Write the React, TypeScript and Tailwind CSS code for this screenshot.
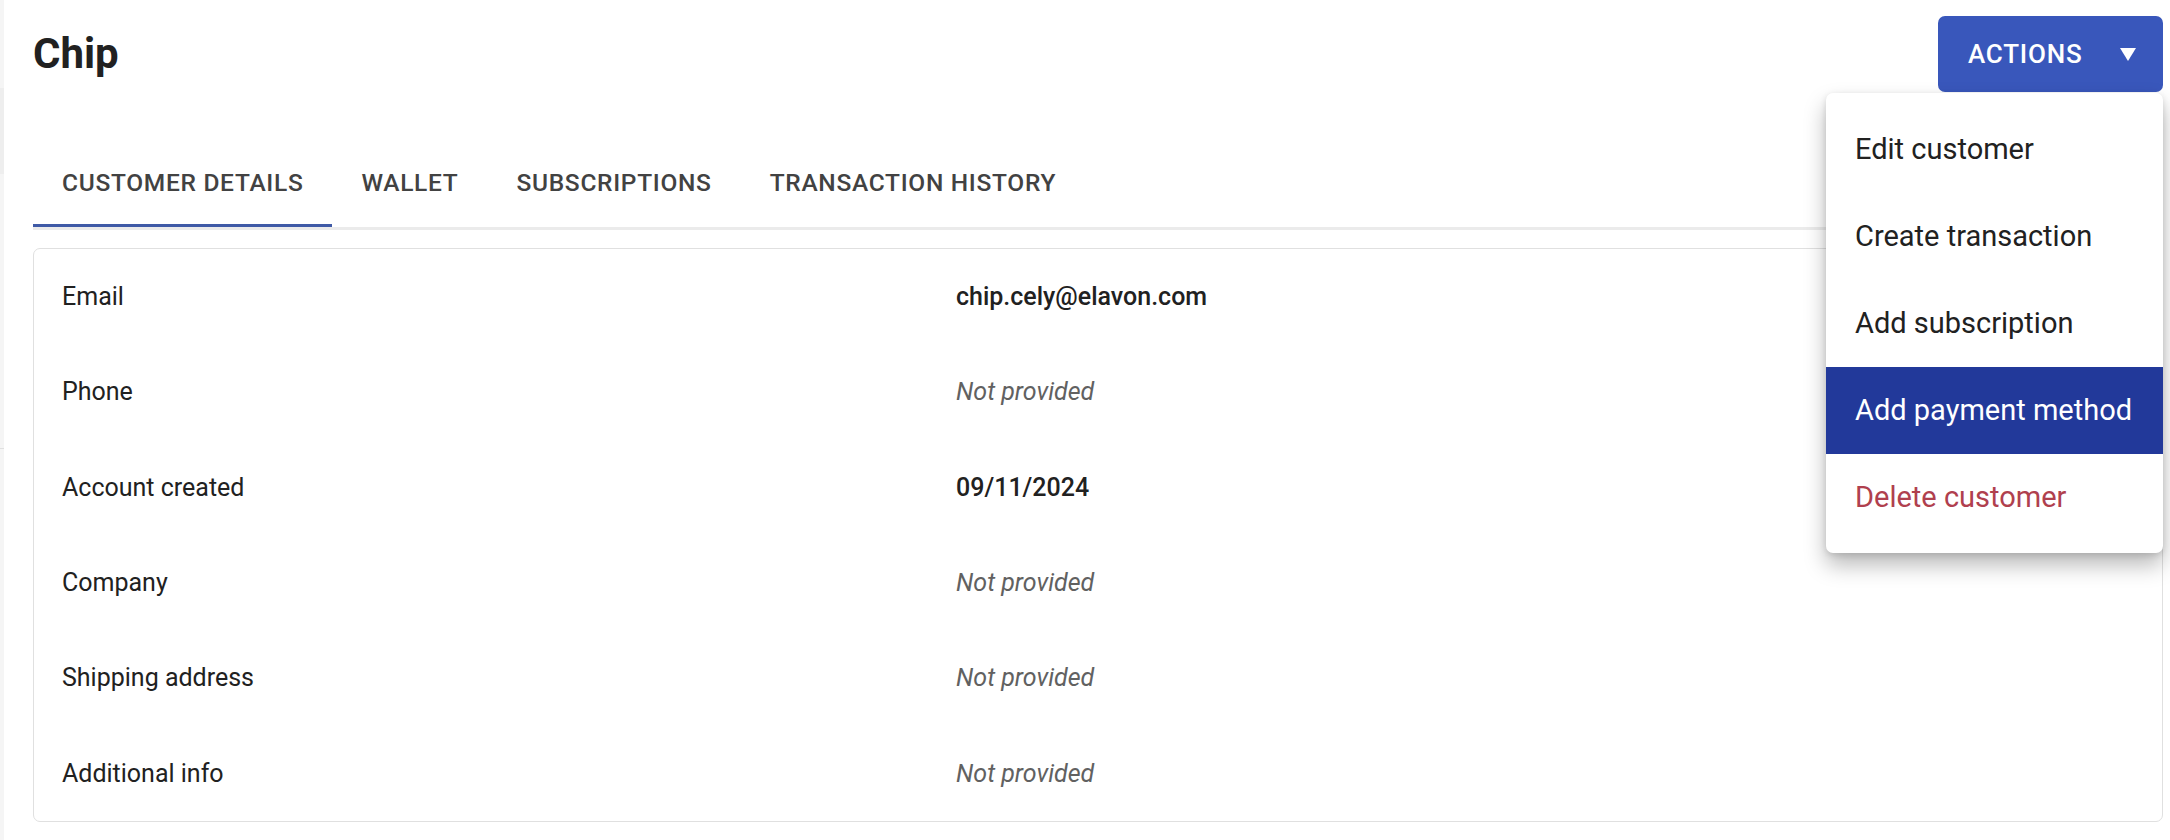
import React from 'react';

const rows = [
  { label: 'Email', value: 'chip.cely@elavon.com' },
  { label: 'Phone', value: null },
  { label: 'Account created', value: '09/11/2024' },
  { label: 'Company', value: null },
  { label: 'Shipping address', value: null },
  { label: 'Additional info', value: null },
];

const tabs = ['Customer details', 'Wallet', 'Subscriptions', 'Transaction history'];

const menuItems = [
  { label: 'Edit customer' },
  { label: 'Create transaction' },
  { label: 'Add subscription' },
  { label: 'Add payment method', active: true },
  { label: 'Delete customer', danger: true },
];

function ActionsMenu() {
  return (
    <div className="absolute right-0 top-full mt-px w-[337px] rounded-[7px] bg-white pt-[13px] pb-[12px] shadow-[0_12px_22px_rgba(0,0,0,0.28),0_2px_6px_rgba(0,0,0,0.12)] z-10">
      {menuItems.map((item) => (
        <div
          key={item.label}
          className={
            'flex h-[87px] items-center px-[29px] text-[29px] ' +
            (item.active ? 'bg-[#22399a] text-white' : item.danger ? 'text-[#b0404e]' : 'text-[#212121]')
          }
        >
          {item.label}
        </div>
      ))}
    </div>
  );
}

export default function App() {
  return (
    <div className="flex min-h-[840px] w-[2170px] bg-white" style={{ fontFamily: 'Roboto, "Noto Sans", sans-serif' }}>
      <div className="flex w-[4px] flex-col bg-[#f5f5f5]">
        <div className="h-[88px]" />
        <div className="h-[86px] bg-[#eeeeee]" />
        <div className="h-[275px] border-b border-[#e0e0e0]" />
      </div>

      <div className="flex-1 pl-[29px] pr-[7px]">
        {/* header */}
        <div className="relative flex h-[76px] mt-[16px] items-center justify-between">
          <h1 className="text-[42px] font-bold text-[#212121] leading-none">Chip</h1>
          <div className="relative">
            <button className="flex h-[76px] w-[225px] items-center justify-between rounded-[7px] bg-[#3957bb] pl-[30px] pr-[27px] text-[26px] font-medium tracking-[0.03em] text-white">
              ACTIONS
              <svg width="16" height="13" viewBox="0 0 16 13">
                <path d="M0 0 L16 0 L8 13 Z" fill="white" />
              </svg>
            </button>
            <ActionsMenu />
          </div>
        </div>

        {/* tabs */}
        <div className="mt-[47px] flex border-b-[3px] border-[#ebebeb]">
          {tabs.map((t, i) => (
            <div
              key={t}
              className="relative flex h-[88px] items-center px-[29px] text-[24.5px] font-medium uppercase tracking-[0.02857em] text-[#424242]"
            >
              {t}
              {i === 0 && <div className="absolute bottom-0 left-0 right-0 h-[3px] bg-[#3f5aa6]" />}
            </div>
          ))}
        </div>

        {/* details card */}
        <div className="mt-[18px] rounded-[7px] border border-[#e0e0e0]">
          {rows.map((r) => (
            <div key={r.label} className="flex h-[95.33px] items-center px-[28px] text-[25px]">
              <div className="w-[894px] text-[#212121]">{r.label}</div>
              {r.value ? (
                <div className="font-medium text-[#212121]">{r.value}</div>
              ) : (
                <div className="italic text-[#616161]">Not provided</div>
              )}
            </div>
          ))}
        </div>
      </div>
    </div>
  );
}
